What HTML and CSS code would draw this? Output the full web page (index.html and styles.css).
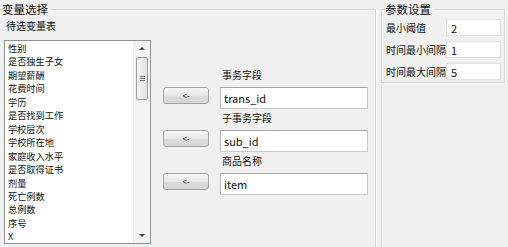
FILE: index.html
```html
<!DOCTYPE html>
<html lang="zh-CN">
<head>
  <meta charset="UTF-8" />
  <title>变量选择</title>
  <link rel="stylesheet" href="styles.css">
</head>
<body>
  <div class="vars-group">
    <div class="group-title">变量选择</div>
    <div class="list-label">待选变量表</div>
    <div class="var-row">
      <div class="listbox">
        <ul class="list-items">
          <li>性别</li>
          <li>是否独生子女</li>
          <li>期望薪酬</li>
          <li>花费时间</li>
          <li>学历</li>
          <li>是否找到工作</li>
          <li>学校层次</li>
          <li>学校所在地</li>
          <li>家庭收入水平</li>
          <li>是否取得证书</li>
          <li>剂量</li>
          <li>死亡例数</li>
          <li>总例数</li>
          <li>序号</li>
          <li>X</li>
        </ul>
        <div class="scrollbar">
          <div class="arrow"><span class="tri-up"></span></div>
          <div class="thumb"><span class="grip"></span></div>
          <div class="track"></div>
          <div class="arrow"><span class="tri-down"></span></div>
        </div>
      </div>

      <div class="mapping">
        <label class="field-label" for="trans">事务字段</label>
        <button class="move-btn">&lt;-</button>
        <input class="field-input" id="trans" type="text" value="trans_id" />

        <label class="field-label" for="sub">子事务字段</label>
        <button class="move-btn">&lt;-</button>
        <input class="field-input" id="sub" type="text" value="sub_id" />

        <label class="field-label" for="item">商品名称</label>
        <button class="move-btn">&lt;-</button>
        <input class="field-input" id="item" type="text" value="item" />
      </div>
    </div>
  </div>

  <div class="side">
    <div class="params-group">
      <div class="group-title">参数设置</div>
      <div class="param-grid">
        <label for="minv">最小阈值</label>
        <input class="param-input" id="minv" type="text" value="2" />
        <label for="mingap">时间最小间隔</label>
        <input class="param-input" id="mingap" type="text" value="1" />
        <label for="maxgap">时间最大间隔</label>
        <input class="param-input" id="maxgap" type="text" value="5" />
      </div>
    </div>
    <div class="side-rest"></div>
  </div>
</body>
</html>
```

FILE: styles.css
```css
body {
  margin: 0;
  width: 508px;
  height: 247px;
  overflow: hidden;
  display: flex;
  align-items: flex-start;
  background: #f0f0f0;
  color: #111;
  font-family: "Noto Sans CJK SC", "Noto Sans", sans-serif;
  font-size: 10px;
}
.vars-group {
  width: 376px;
  height: 238px;
  margin-top: 9px;
  padding-left: 4px;
  box-sizing: border-box;
  border-top: 1px solid #d5d5d5;
  border-right: 1px solid #d5d5d5;
  box-shadow: 1px 0 0 #fff, inset 0 1px 0 #fff;
  display: flex;
  flex-direction: column;
}
.group-title {
  align-self: flex-start;
  margin: -8px 0 0 -2px;
  padding-right: 2px;
  line-height: 14px;
  font-size: 11.5px;
  background: #f0f0f0;
}
.list-label {
  margin: 3px 0 0 2px;
  line-height: 14px;
}
.var-row {
  display: flex;
  align-items: flex-start;
  margin-top: 7px;
}
.listbox {
  width: 147px;
  height: 204px;
  box-sizing: border-box;
  border: 1px solid #8e939b;
  background: #fff;
  display: flex;
}
.list-items {
  flex: 1;
  margin: 0;
  padding: 1px 0 0 3px;
  list-style: none;
  font-size: 9.2px;
  line-height: 13.45px;
  overflow: hidden;
}
.scrollbar {
  width: 16px;
  background: #f3f3f3;
  border-left: 1px solid #ececec;
  display: flex;
  flex-direction: column;
  align-items: center;
}
.arrow {
  height: 15px;
  display: flex;
  align-items: center;
  justify-content: center;
}
.tri-up, .tri-down {
  width: 0;
  height: 0;
  border-left: 3px solid transparent;
  border-right: 3px solid transparent;
}
.tri-up { border-bottom: 3px solid #444; }
.tri-down { border-top: 3px solid #444; }
.thumb {
  width: 12px;
  height: 43px;
  margin-top: 1px;
  box-sizing: border-box;
  border: 1px solid #9a9a9a;
  border-radius: 2px;
  background: linear-gradient(to right, #f4f4f4, #e2e2e2);
  display: flex;
  align-items: center;
  justify-content: center;
}
.grip {
  width: 5px;
  height: 5px;
  background: repeating-linear-gradient(to bottom, #777 0 1px, transparent 1px 2px);
}
.track { flex: 1; }
.mapping {
  display: grid;
  grid-template-columns: 46px 148px;
  column-gap: 11px;
  margin-left: 12px;
  padding-top: 28px;
}
.field-label {
  grid-column: 2;
  line-height: 14px;
  margin-bottom: 5px;
  padding-left: 2px;
}
.move-btn {
  grid-column: 1;
  align-self: start;
  height: 17px;
  padding: 0;
  border: 1px solid #a3a3a3;
  border-radius: 3px;
  background: linear-gradient(#f6f6f6, #e8e8e8 50%, #dcdcdc 51%, #d6d6d6);
  font-family: "Noto Sans", sans-serif;
  font-size: 8px;
  color: #222;
}
.field-input {
  grid-column: 2;
  height: 22px;
  margin: 0 0 2px;
  padding: 0 0 0 3px;
  box-sizing: border-box;
  border: 1px solid #c9c9c9;
  border-top-color: #a6a6a6;
  border-left-color: #b5b5b5;
  background: #fff;
  font-family: "Noto Sans CJK SC", sans-serif;
  font-size: 11px;
  color: #111;
  outline: none;
}
.side {
  width: 124px;
  height: 247px;
  margin-left: 5px;
  display: flex;
  flex-direction: column;
}
.params-group {
  margin-top: 9px;
  padding: 0 3px 2px 4px;
  border: 1px solid #d5d5d5;
  box-shadow: inset 1px 1px 0 #fff, 1px 1px 0 #fff;
  display: flex;
  flex-direction: column;
}
.params-group .group-title {
  margin-left: -1px;
}
.param-grid {
  display: grid;
  grid-template-columns: 1fr 55px;
  row-gap: 5px;
  margin-top: 3px;
  align-items: center;
}
.param-grid label {
  line-height: 17px;
  white-space: nowrap;
}
.param-input {
  width: 55px;
  height: 17px;
  margin: 0;
  padding: 0 0 0 4px;
  box-sizing: border-box;
  border: 1px solid #e2e2e2;
  background: #fff;
  font-family: "Noto Sans CJK SC", sans-serif;
  font-size: 11px;
  color: #111;
  outline: none;
}
.side-rest {
  flex: 1;
  margin-top: 2px;
  border-left: 1px solid #dcdcdc;
}
```
